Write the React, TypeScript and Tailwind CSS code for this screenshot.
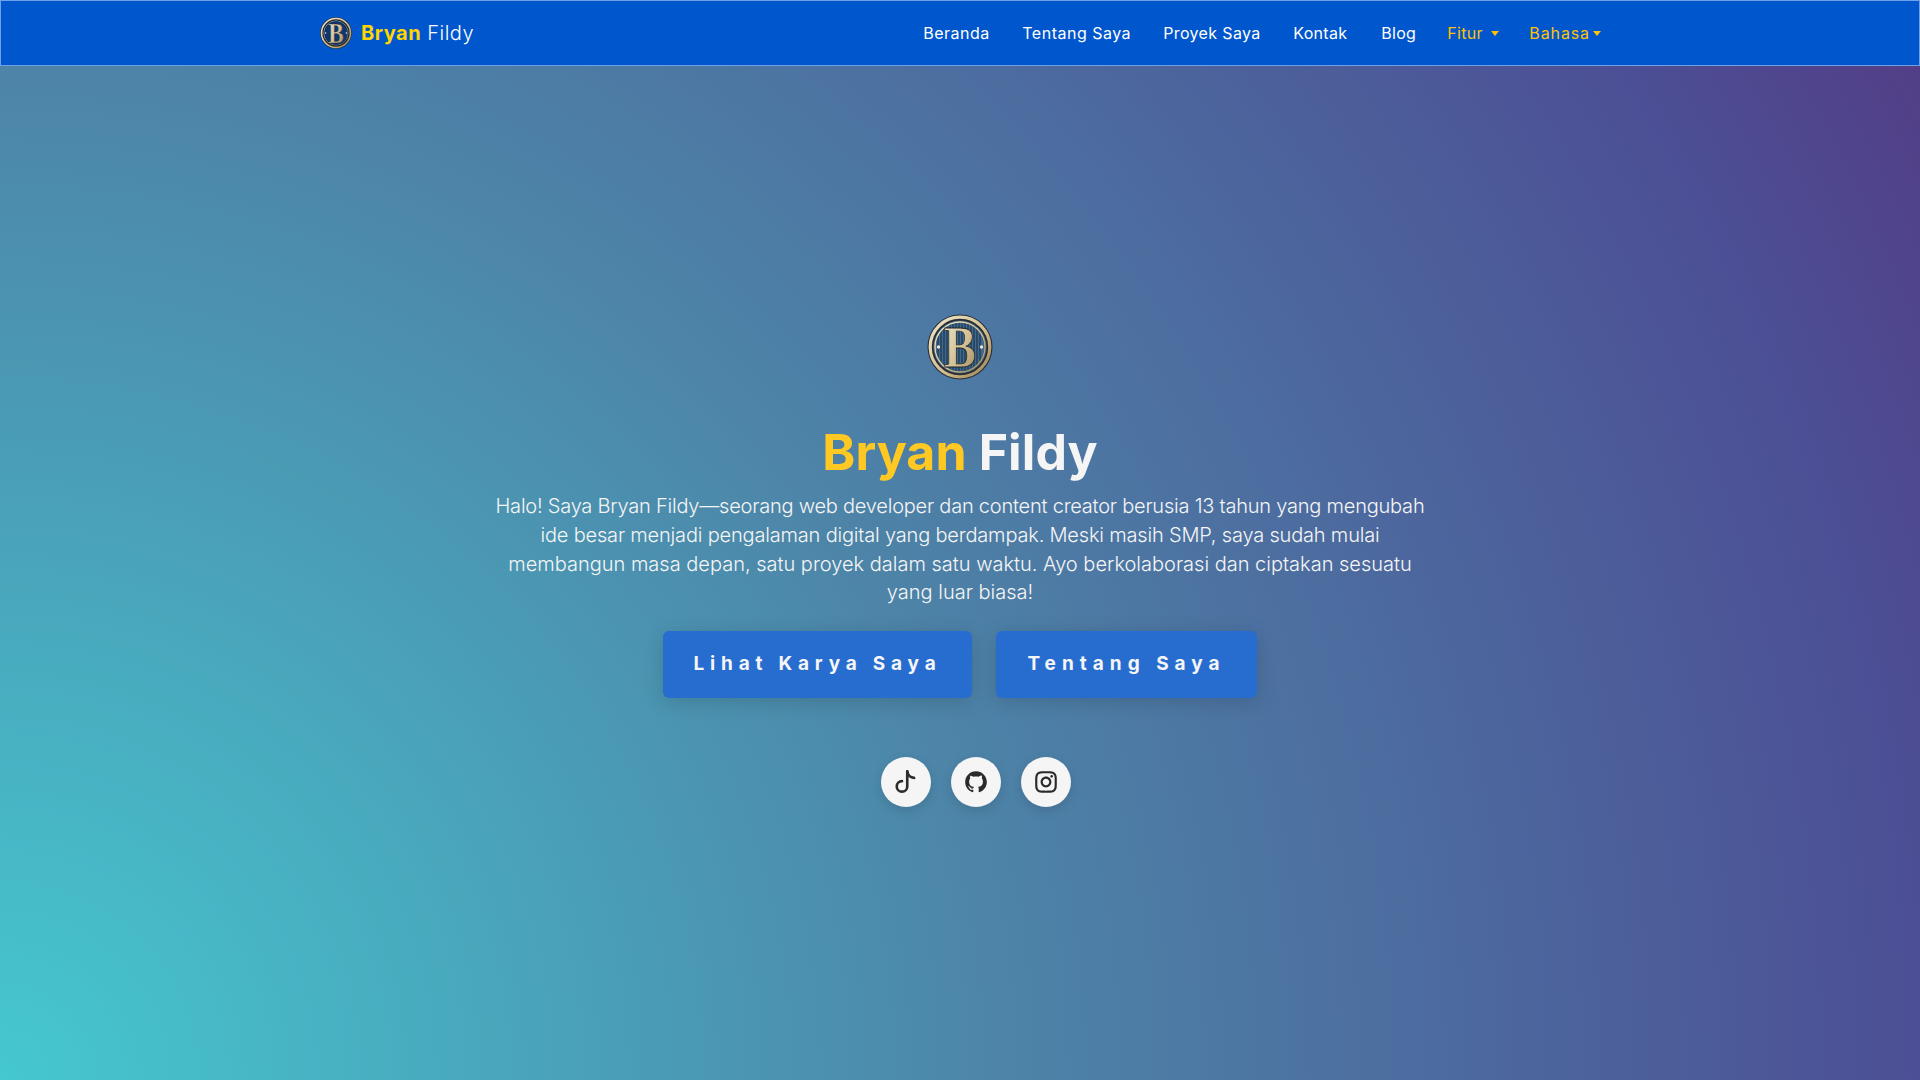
import React from "react";
import { RiGithubFill, RiInstagramLine } from "react-icons/ri";

function Logo({ size, dark }: { size: number; dark?: boolean }) {
  const id = dark ? "gold-small" : "gold-big";
  return (
    <svg width={size} height={size} viewBox="0 0 66 66" className="shrink-0">
      <defs>
        <linearGradient id={id} x1="0" y1="0" x2="1" y2="1">
          <stop offset="0" stopColor="#efe7cd" />
          <stop offset="0.55" stopColor="#d3c093" />
          <stop offset="1" stopColor="#9a8354" />
        </linearGradient>
        <clipPath id={id + "-clip"}>
          <circle cx="33" cy="33" r="24" />
        </clipPath>
      </defs>
      <circle cx="33" cy="33" r="32.5" fill="#2a2c30" />
      <circle cx="33" cy="33" r="29.8" fill="none" stroke={`url(#${id})`} strokeWidth="3.2" />
      <circle cx="33" cy="33" r="26.6" fill={dark ? "#182235" : "#3c5f82"} />
      <circle cx="33" cy="33" r="25" fill="none" stroke={`url(#${id})`} strokeWidth="1.4" />
      <circle cx="33" cy="33" r="24" fill={dark ? "#0c3c86" : "#3f6a90"} />
      <g clipPath={`url(#${id}-clip)`} stroke="#1b2a3c" strokeWidth="1">
        <path d="M11 8V58M14 8V58M17 8V58M20 8V58M23 8V58M26 8V58M29 8V58M32 8V58M35 8V58M38 8V58M41 8V58M44 8V58M47 8V58M50 8V58M53 8V58" />
      </g>
      <circle cx="11.5" cy="33" r="1.7" fill="#efe7cd" />
      <circle cx="54.5" cy="33" r="1.7" fill="#efe7cd" />
      <text
        x="17"
        y="53"
        textLength="32"
        lengthAdjust="spacingAndGlyphs"
        fontFamily="'Liberation Serif', serif"
        fontWeight="700"
        fontSize="60"
        fill={`url(#${id})`}
        stroke="#23262b"
        strokeWidth="0.8"
      >
        B
      </text>
    </svg>
  );
}

function Caret() {
  return <span className="inline-block w-0 h-0 border-x-[4.5px] border-x-transparent border-t-[5px] border-t-[#ffc107]" />;
}

function TiktokIcon() {
  return (
    <svg width="30" height="30" viewBox="0 0 24 24" fill="none" stroke="currentColor" strokeWidth="2.1" strokeLinecap="round">
      <path d="M13 3.5V15.5a4.2 4.2 0 1 1-4.2-4.2" />
      <path d="M13 3.5c.3 3 2.6 5 5.5 5.2" />
    </svg>
  );
}

const circle =
  "w-[50px] h-[50px] rounded-full bg-[#f5f5f5] text-[#2b2b2b] flex items-center justify-center shadow-[0_4px_12px_rgba(0,0,0,0.12)]";

export default function App() {
  return (
    <div className="h-[1080px] overflow-hidden flex flex-col font-['Inter','Liberation_Sans',sans-serif] bg-[radial-gradient(circle_at_0%_100%,#45c8d0_0%,#4d85a8_45%,#4c4f95_87%,#533c85_100%)]">
      <nav className="h-[66px] shrink-0 bg-[#0056cc] border border-[#6f9fe6] flex justify-center">
        <div className="w-[1320px] pl-[20px] pr-[19px] flex items-center justify-between">
          <a className="flex items-center gap-[9px] text-[20px] leading-none text-white">
            <Logo size={32} dark />
            <span className="tracking-[0.5px]">
              <b className="font-bold text-[#ffd400]">Bryan</b> <span className="font-light">Fildy</span>
            </span>
          </a>
          <div className="flex items-center text-[16px] text-white font-normal tracking-[0.3px]">
            <a className="w-[99px] tracking-[0.5px]">Beranda</a>
            <a className="w-[141px] tracking-[0.5px]">Tentang Saya</a>
            <a className="w-[130px] tracking-[0.35px]">Proyek Saya</a>
            <a className="w-[88px]">Kontak</a>
            <a className="w-[66px]">Blog</a>
            <a className="w-[82px] text-[#ffc107] flex items-center gap-[8px]">Fitur <Caret /></a>
            <a className="text-[#ffc107] flex items-center gap-[3px] tracking-[0.9px]">Bahasa<Caret /></a>
          </div>
        </div>
      </nav>
      <main className="flex flex-col items-center">
        <div className="mt-[248px]"><Logo size={66} /></div>
        <h1 className="mt-[43px] text-[50px] leading-[58px] font-bold tracking-[0.1px]">
          <span className="text-[#ffc823]">Bryan</span> <span className="text-[#f5f5f5]">Fildy</span>
        </h1>
        <p className="mt-[11px] text-[20px] leading-[28.8px] font-light text-[#f5f5f5] text-center">
          <span className="block tracking-[-0.22px]">Halo! Saya Bryan Fildy—seorang web developer dan content creator berusia 13 tahun yang mengubah</span>
          <span className="block tracking-[-0.18px]">ide besar menjadi pengalaman digital yang berdampak. Meski masih SMP, saya sudah mulai</span>
          <span className="block tracking-[0px]">membangun masa depan, satu proyek dalam satu waktu. Ayo berkolaborasi dan ciptakan sesuatu</span>
          <span className="block tracking-[0px]">yang luar biasa!</span>
        </p>
        <div className="mt-[24px] flex gap-[24px]">
          <button className="w-[309px] h-[67px] rounded-[6px] bg-[#276dd0] text-[#f5f5f5] text-[19px] font-bold tracking-[5.8px] shadow-[0_4px_20px_rgba(0,0,0,0.15)]">Lihat Karya Saya</button>
          <button className="w-[261px] h-[67px] rounded-[6px] bg-[#276dd0] text-[#f5f5f5] text-[19px] font-bold tracking-[6px] shadow-[0_4px_20px_rgba(0,0,0,0.15)]">Tentang Saya</button>
        </div>
        <div className="mt-[59px] flex gap-[20px] ml-[32px]">
          <a className={circle}><TiktokIcon /></a>
          <a className={circle}><RiGithubFill size={26} /></a>
          <a className={circle}><RiInstagramLine size={26} /></a>
        </div>
      </main>
    </div>
  );
}
